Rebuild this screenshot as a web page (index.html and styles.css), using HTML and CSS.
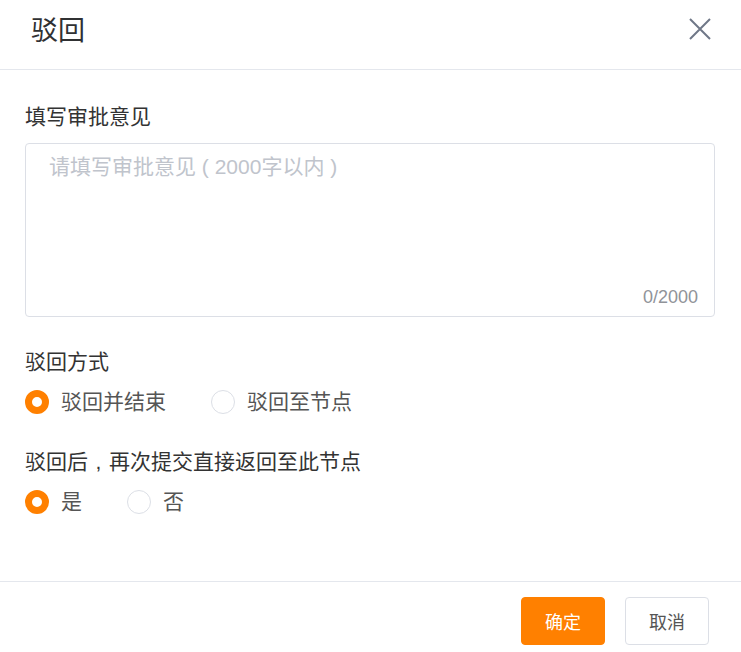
FILE: index.html
```html
<!DOCTYPE html>
<html lang="zh-CN">
<head>
<meta charset="UTF-8">
<meta name="viewport" content="width=device-width, initial-scale=1.0">
<title>驳回</title>
<link rel="stylesheet" href="styles.css">
</head>
<body>

<div class="dialog">
    <!-- Header -->
    <div class="dialog-header">
        <span class="dialog-title">驳回</span>
        <span class="dialog-close">
            <svg width="24" height="24" viewBox="0 0 24 24">
                <path d="M2 2 L22 22 M22 2 L2 22" stroke="#6f7787" stroke-width="2" fill="none"/>
            </svg>
        </span>
    </div>

    <!-- Body -->
    <div class="dialog-body">
        <div class="field-label">填写审批意见</div>
        <div class="textarea-box">
            <textarea class="opinion" placeholder="请填写审批意见 ( 2000字以内 )" maxlength="2000"></textarea>
            <span class="counter">0/2000</span>
        </div>

        <div class="field-label mode-label">驳回方式</div>
        <div class="radio-group">
            <label class="radio checked"><span class="radio-dot"></span>驳回并结束</label>
            <label class="radio"><span class="radio-dot"></span>驳回至节点</label>
        </div>

        <div class="field-label back-label">驳回后<span class="punct">,</span>再次提交直接返回至此节点</div>
        <div class="radio-group">
            <label class="radio checked"><span class="radio-dot"></span>是</label>
            <label class="radio"><span class="radio-dot"></span>否</label>
        </div>
    </div>

    <!-- Footer -->
    <div class="dialog-footer">
        <button class="btn btn-primary">确定</button>
        <button class="btn">取消</button>
    </div>
</div>

</body>
</html>
```

FILE: styles.css
```css
/* Reject dialog */
body {
    margin: 0;
    font-family: "Liberation Sans", "Noto Sans CJK SC", sans-serif;
    color: #333;
    background-color: #fff;
}

.dialog {
    width: 741px;
    height: 652px;
    display: flex;
    flex-direction: column;
}

.dialog-header {
    height: 70px;
    box-sizing: border-box;
    border-bottom: 1px solid #e4e7ed;
    display: flex;
    align-items: center;
    justify-content: space-between;
    padding: 0 29px 0 31px;
}

.dialog-title {
    font-size: 27px;
    line-height: 32px;
    color: #303133;
    margin-top: -8px;
}

.dialog-close {
    display: flex;
    margin-top: -12px;
}

.dialog-body {
    flex: 1;
    padding: 34px 26px 0 25px;
}

.field-label {
    font-size: 21px;
    line-height: 26px;
    color: #333;
}

.mode-label {
    margin-top: 32px;
}

.back-label {
    margin-top: 35px;
}

/* full-width comma, centred in its cell */
.punct {
    display: inline-block;
    width: 1em;
    text-align: center;
}

.textarea-box {
    position: relative;
    margin-top: 13px;
    height: 174px;
    box-sizing: border-box;
    border: 1px solid #dcdfe6;
    border-radius: 4px;
}

.opinion {
    display: block;
    width: 100%;
    height: 100%;
    box-sizing: border-box;
    border: none;
    outline: none;
    resize: none;
    padding: 10px 23px;
    font-family: inherit;
    font-size: 21px;
    line-height: 26px;
    background: transparent;
}

.opinion::placeholder {
    color: #c0c4cc;
}

.counter {
    position: absolute;
    right: 16px;
    bottom: 8px;
    font-size: 18px;
    line-height: 22px;
    color: #909399;
}

.radio-group {
    display: flex;
    gap: 45px;
    margin-top: 15px;
}

.radio {
    display: flex;
    align-items: center;
    font-size: 21px;
    line-height: 24px;
    color: #555;
}

.radio-dot {
    width: 24px;
    height: 24px;
    box-sizing: border-box;
    border: 1px solid #dcdfe6;
    border-radius: 50%;
    margin-right: 12px;
}

.radio.checked .radio-dot {
    border: 7px solid #ff8000;
}

.dialog-footer {
    height: 71px;
    box-sizing: border-box;
    border-top: 1px solid #e4e7ed;
    display: flex;
    justify-content: flex-end;
    gap: 20px;
    padding: 15px 32px 0 0;
}

.btn {
    width: 84px;
    height: 48px;
    border: 1px solid #dcdfe6;
    border-radius: 4px;
    background-color: #fff;
    color: #555;
    font-family: inherit;
    font-size: 18px;
}

.btn-primary {
    background-color: #ff8000;
    border-color: #ff8000;
    color: #fff;
}
```
